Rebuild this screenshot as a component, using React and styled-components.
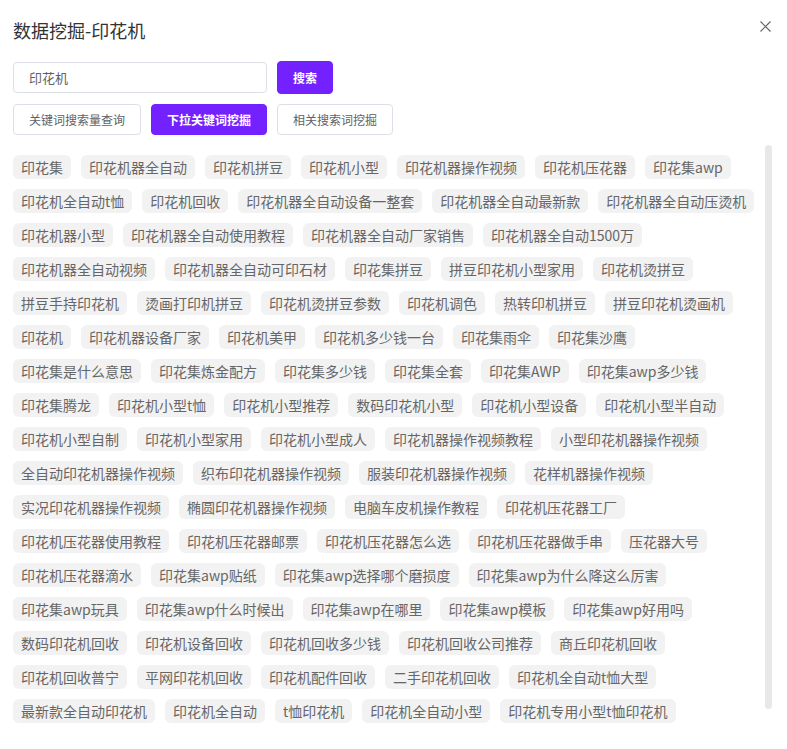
import { useEffect, useRef, useState } from "react";
import styled, { createGlobalStyle } from "styled-components";

const GlobalStyle = createGlobalStyle`
  html, body {
    margin: 0;
    padding: 0;
    background: #fff;
    font-family: "Noto Sans CJK SC", "Noto Sans", sans-serif;
  }
  * {
    box-sizing: border-box;
  }
`;

const Dialog = styled.div`
  height: 100vh;
  display: flex;
  flex-direction: column;
  padding: 0 14px 0 13px;
  overflow: hidden;
`;

const Header = styled.div`
  display: flex;
  justify-content: space-between;
  align-items: flex-start;
  padding-top: 18px;
  height: 42px;
`;

const Title = styled.h2`
  margin: 0;
  font-size: 18px;
  line-height: 24px;
  font-weight: 400;
  color: #333;
`;

const CloseButton = styled.button`
  border: 0;
  background: none;
  padding: 0;
  margin: 2px 2px 0 0;
  width: 12px;
  height: 12px;
  display: flex;
  align-items: center;
  justify-content: center;
  cursor: pointer;
`;

const SearchRow = styled.div`
  display: flex;
  align-items: center;
  gap: 10px;
  margin-top: 19px;
`;

const Input = styled.input`
  width: 254px;
  height: 31px;
  border: 1px solid #dcdfe6;
  border-radius: 4px;
  padding: 0 15px;
  font-family: inherit;
  font-size: 13px;
  color: #606266;
  outline: none;
`;

const Button = styled.button`
  height: ${(p) => (p.$tall ? "33px" : "31px")};
  padding: 0 15px;
  border-radius: 4px;
  border: 1px solid ${(p) => (p.$primary ? "#7321ff" : "#dcdfe6")};
  background: ${(p) => (p.$primary ? "#7321ff" : "#fff")};
  color: ${(p) => (p.$primary ? "#fff" : "#606266")};
  font-family: inherit;
  font-size: 12px;
  font-weight: ${(p) => (p.$primary ? 700 : 400)};
  line-height: 1;
  cursor: pointer;
  white-space: nowrap;
`;

const TabRow = styled.div`
  display: flex;
  gap: 10px;
  margin-top: 10px;
`;

const TagArea = styled.div`
  position: relative;
  flex: 1;
  min-height: 0;
  margin-top: 10px;
`;

const TagScroll = styled.div`
  height: 100%;
  overflow-y: auto;
  padding: 10px 0 69px;
  scrollbar-width: none;

  &::-webkit-scrollbar {
    display: none;
  }
`;

/* thin rounded thumb drawn over the right edge of the tag list */
const ScrollThumb = styled.div`
  position: absolute;
  right: 1px;
  width: 7px;
  border-radius: 4px;
  background: #e8e8e8;
`;

const TagList = styled.div`
  display: flex;
  flex-wrap: wrap;
  gap: 10px;
  padding-right: 9px;
`;

const Tag = styled.span`
  height: 24px;
  padding: 0 8px;
  border-radius: 6px;
  background: #f2f2f2;
  color: #666;
  font-size: 14px;
  line-height: 24px;
  white-space: nowrap;
  cursor: pointer;
`;

const keywords = [
  "印花集", "印花机器全自动", "印花机拼豆", "印花机小型", "印花机器操作视频", "印花机压花器", "印花集awp",
  "印花机全自动t恤", "印花机回收", "印花机器全自动设备一整套", "印花机器全自动最新款", "印花机器全自动压烫机",
  "印花机器小型", "印花机器全自动使用教程", "印花机器全自动厂家销售", "印花机器全自动1500万",
  "印花机器全自动视频", "印花机器全自动可印石材", "印花集拼豆", "拼豆印花机小型家用", "印花机烫拼豆",
  "拼豆手持印花机", "烫画打印机拼豆", "印花机烫拼豆参数", "印花机调色", "热转印机拼豆", "拼豆印花机烫画机",
  "印花机", "印花机器设备厂家", "印花机美甲", "印花机多少钱一台", "印花集雨伞", "印花集沙鹰",
  "印花集是什么意思", "印花集炼金配方", "印花集多少钱", "印花集全套", "印花集AWP", "印花集awp多少钱",
  "印花集腾龙", "印花机小型t恤", "印花机小型推荐", "数码印花机小型", "印花机小型设备", "印花机小型半自动",
  "印花机小型自制", "印花机小型家用", "印花机小型成人", "印花机器操作视频教程", "小型印花机器操作视频",
  "全自动印花机器操作视频", "织布印花机器操作视频", "服装印花机器操作视频", "花样机器操作视频",
  "实况印花机器操作视频", "椭圆印花机器操作视频", "电脑车皮机操作教程", "印花机压花器工厂",
  "印花机压花器使用教程", "印花机压花器邮票", "印花机压花器怎么选", "印花机压花器做手串", "压花器大号",
  "印花机压花器滴水", "印花集awp贴纸", "印花集awp选择哪个磨损度", "印花集awp为什么降这么厉害",
  "印花集awp玩具", "印花集awp什么时候出", "印花集awp在哪里", "印花集awp模板", "印花集awp好用吗",
  "数码印花机回收", "印花机设备回收", "印花机回收多少钱", "印花机回收公司推荐", "商丘印花机回收",
  "印花机回收普宁", "平网印花机回收", "印花机配件回收", "二手印花机回收", "印花机全自动t恤大型",
  "最新款全自动印花机", "印花机全自动", "t恤印花机", "印花机全自动小型", "印花机专用小型t恤印花机",
];

const tabs = ["关键词搜索量查询", "下拉关键词挖掘", "相关搜索词挖掘"];

const CloseIcon = () => (
  <svg width="11" height="11" viewBox="0 0 11 11">
    <path d="M0.5 0.5 L10.5 10.5 M10.5 0.5 L0.5 10.5" stroke="#666" strokeWidth="1.2" fill="none" />
  </svg>
);

const App = () => {
  const [query, setQuery] = useState("印花机");
  const [tab, setTab] = useState(1);
  const scrollRef = useRef(null);
  const [thumb, setThumb] = useState({ top: 0, height: 0 });

  const updateThumb = () => {
    const el = scrollRef.current;
    if (!el) return;
    const { clientHeight, scrollHeight, scrollTop } = el;
    if (scrollHeight <= clientHeight) {
      setThumb({ top: 0, height: 0 });
      return;
    }
    const height = (clientHeight * clientHeight) / scrollHeight;
    const top = (scrollTop / (scrollHeight - clientHeight)) * (clientHeight - height);
    setThumb({ top, height });
  };

  useEffect(() => {
    updateThumb();
    window.addEventListener("resize", updateThumb);
    return () => window.removeEventListener("resize", updateThumb);
  }, []);

  return (
    <>
      <GlobalStyle />
      <Dialog>
        <Header>
          <Title>数据挖掘-印花机</Title>
          <CloseButton aria-label="关闭">
            <CloseIcon />
          </CloseButton>
        </Header>
        <SearchRow>
          <Input value={query} onChange={(e) => setQuery(e.target.value)} />
          <Button $primary $tall>搜索</Button>
        </SearchRow>
        <TabRow>
          {tabs.map((t, i) => (
            <Button key={t} $primary={tab === i} onClick={() => setTab(i)}>
              {t}
            </Button>
          ))}
        </TabRow>
        <TagArea>
          <TagScroll ref={scrollRef} onScroll={updateThumb}>
            <TagList>
              {keywords.map((k) => (
                <Tag key={k}>{k}</Tag>
              ))}
            </TagList>
          </TagScroll>
          {thumb.height > 0 && (
            <ScrollThumb style={{ top: thumb.top, height: thumb.height }} />
          )}
        </TagArea>
      </Dialog>
    </>
  );
};

export default App;
